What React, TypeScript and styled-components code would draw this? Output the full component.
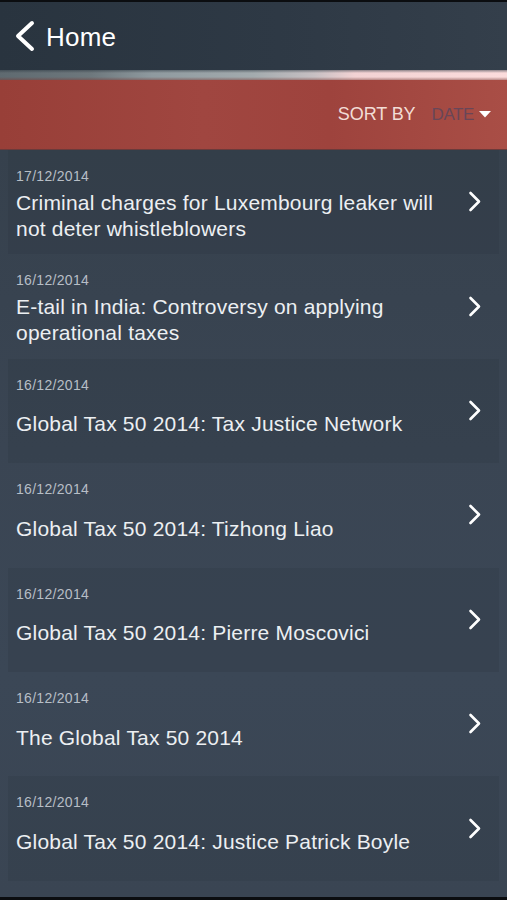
import React from "react";
import styled, { createGlobalStyle } from "styled-components";

const GlobalStyle = createGlobalStyle`
  html, body { margin: 0; padding: 0; background: #0a0c0e; }
  body { font-family: "Liberation Sans", Arial, Helvetica, sans-serif; }
  * { box-sizing: border-box; }
`;

const Screen = styled.div`
  width: 507px;
  height: 900px;
  display: flex;
  flex-direction: column;
  overflow: hidden;
  background: #0b0d10;
  padding-top: 2px;
  padding-bottom: 3px;
`;

const Header = styled.div`
  height: 68px;
  flex: none;
  display: flex;
  align-items: center;
  padding-left: 14px;
  gap: 10px;
  background: linear-gradient(90deg, #29343f 0%, #2e3945 55%, #343f4b 100%);
`;

const HeaderTitle = styled.span`
  color: #ffffff;
  font-size: 26px;
  letter-spacing: 0.2px;
  line-height: 1;
  padding-top: 1px;
`;

const Sheen = styled.div`
  height: 10px;
  flex: none;
  background:
    linear-gradient(180deg, rgba(40, 52, 62, 0.5) 0%, rgba(0, 0, 0, 0) 30%, rgba(0, 0, 0, 0) 70%, rgba(120, 60, 55, 0.5) 100%),
    linear-gradient(90deg, #5f6a70 0%, #6e787d 18%, #8f9a9f 30%, #a3abae 50%, #c7c0c3 62%, #f2d2d3 70%, #fbdcdc 100%);
`;

const SortBar = styled.div`
  height: 70px;
  flex: none;
  display: flex;
  align-items: center;
  justify-content: flex-end;
  padding-right: 16px;
  background: linear-gradient(90deg, #983f38 0%, #a04640 40%, #9e433d 65%, #a94e46 100%);
  border-bottom: 1px solid #6b3a3a;
`;

const SortLabel = styled.span`
  color: #f2ddd6;
  font-size: 18px;
  letter-spacing: -0.1px;
  margin-right: 16px;
`;

const SortValue = styled.span`
  color: #684658;
  font-size: 17px;
  letter-spacing: -0.4px;
  margin-right: 5px;
`;

const List = styled.div`
  flex: 1;
  display: flex;
  flex-direction: column;
  background: linear-gradient(180deg, #36414d 0%, #3a4553 40%, #3b4756 70%, #3a4553 100%);
`;

const Row = styled.div<{ $shaded: boolean }>`
  height: 104.4px;
  flex: none;
  margin: 0 8px;
  padding: 0 0 0 8px;
  display: flex;
  align-items: center;
  background: ${(p) => (p.$shaded ? "rgba(40, 48, 58, 0.2)" : "transparent")};
`;

const TextCol = styled.div`
  flex: 1;
  height: 100%;
  display: flex;
  flex-direction: column;
  padding-top: 18px;
  padding-bottom: 8px;
  min-width: 0;
`;

const DateText = styled.div`
  color: #b7bec6;
  font-size: 14px;
  line-height: 17px;
  letter-spacing: 0.3px;
`;

const TitleArea = styled.div`
  flex: 1;
  display: flex;
  align-items: center;
`;

const Title = styled.div`
  color: #eceff2;
  font-size: 21px;
  line-height: 26px;
  letter-spacing: 0.2px;
  max-width: 440px;
`;

const ChevronCell = styled.div`
  width: 50px;
  flex: none;
  display: flex;
  justify-content: flex-start;
  padding-left: 19px;
  padding-bottom: 1px;
`;

const BackChevron = () => (
  <svg width="22" height="32" viewBox="0 0 22 32" fill="none">
    <path d="M18 3 L4 16 L18 29" stroke="#ffffff" strokeWidth="4" strokeLinecap="round" strokeLinejoin="round" />
  </svg>
);

const RowChevron = () => (
  <svg width="14" height="21" viewBox="0 0 14 21" fill="none">
    <path d="M2.5 2 L11 10.5 L2.5 19" stroke="#ffffff" strokeWidth="2.6" strokeLinecap="round" strokeLinejoin="round" />
  </svg>
);

const Caret = () => (
  <svg width="12" height="7" viewBox="0 0 12 7">
    <path d="M0 0 L12 0 L6 6.5 Z" fill="#ffffff" />
  </svg>
);

const items = [
  { date: "17/12/2014", title: "Criminal charges for Luxembourg leaker will not deter whistleblowers" },
  { date: "16/12/2014", title: "E-tail in India: Controversy on applying operational taxes" },
  { date: "16/12/2014", title: "Global Tax 50 2014: Tax Justice Network" },
  { date: "16/12/2014", title: "Global Tax 50 2014: Tizhong Liao" },
  { date: "16/12/2014", title: "Global Tax 50 2014: Pierre Moscovici" },
  { date: "16/12/2014", title: "The Global Tax 50 2014" },
  { date: "16/12/2014", title: "Global Tax 50 2014: Justice Patrick Boyle" },
];

export default function App() {
  return (
    <>
      <GlobalStyle />
      <Screen>
        <Header>
          <BackChevron />
          <HeaderTitle>Home</HeaderTitle>
        </Header>
        <Sheen />
        <SortBar>
          <SortLabel>SORT BY</SortLabel>
          <SortValue>DATE</SortValue>
          <Caret />
        </SortBar>
        <List>
          {items.map((it, i) => (
            <Row key={i} $shaded={i % 2 === 0}>
              <TextCol>
                <DateText>{it.date}</DateText>
                <TitleArea>
                  <Title>{it.title}</Title>
                </TitleArea>
              </TextCol>
              <ChevronCell>
                <RowChevron />
              </ChevronCell>
            </Row>
          ))}
        </List>
      </Screen>
    </>
  );
}
